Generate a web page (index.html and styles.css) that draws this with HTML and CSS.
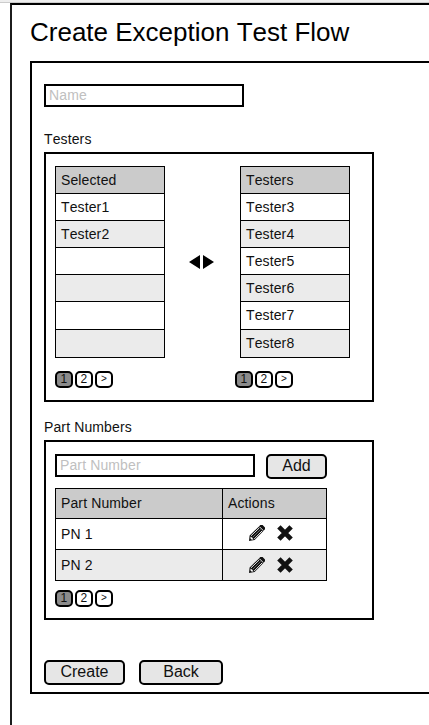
FILE: index.html
```html
<!DOCTYPE html>
<html lang="en">
<head>
<meta charset="utf-8">
<title>Create Exception Test Flow</title>
<link rel="stylesheet" href="styles.css">
</head>
<body>
<svg class="defs" width="0" height="0" aria-hidden="true">
  <symbol id="pencil" viewBox="0 0 16 16">
    <path fill="currentColor" d="M0 16 .6 10.4 10 1.4 11.3 0H13.6L16 2.4V4.2L14.8 5.4 5.6 15Z"/>
    <path fill="none" stroke="#fff" stroke-width=".9" d="M2 10.8 10.2 3M5.2 14 13.2 5.8M10.6 1.9 14.1 5.4"/>
    <path fill="#fff" d="M1.7 11.4 4.6 14.3 2.8 14.7 1.3 13.2Z"/>
    <path fill="none" stroke="#aaa" stroke-width=".6" d="M3.6 12.4 11.7 4.4"/>
  </symbol>
  <symbol id="cross" viewBox="0 0 16 16">
    <path fill="none" stroke="currentColor" stroke-width="4.8" d="M1.9 1.9 14.1 14.1M14.1 1.9 1.9 14.1"/>
  </symbol>
</svg>
<div class="strip"></div>
<main class="window">
  <h1>Create Exception Test Flow</h1>
  <section class="panel">
    <input class="field" placeholder="Name">
    <h2 class="testers-label">Testers</h2>
    <div class="box testers">
      <div>
        <ul class="list">
          <li>Selected</li><li>Tester1</li><li>Tester2</li><li></li><li></li><li></li><li></li>
        </ul>
        <nav class="pager"><span class="on">1</span><span>2</span><span class="next">&gt;</span></nav>
      </div>
      <svg class="arrows" viewBox="0 0 25 14"><path d="M0 7 11 0V14ZM14 0 25 7 14 14Z"/></svg>
      <div class="right">
        <ul class="list">
          <li>Testers</li><li>Tester3</li><li>Tester4</li><li>Tester5</li><li>Tester6</li><li>Tester7</li><li>Tester8</li>
        </ul>
        <nav class="pager"><span class="on">1</span><span>2</span><span class="next">&gt;</span></nav>
      </div>
    </div>
    <h2 class="parts-label">Part Numbers</h2>
    <div class="box parts">
      <div class="entry"><input class="field" placeholder="Part Number"><button class="add">Add</button></div>
      <div class="grid">
        <div class="row head"><span>Part Number</span><span>Actions</span></div>
        <div class="row"><span>PN 1</span><span class="actions"><svg><use href="#pencil"/></svg><svg><use href="#cross"/></svg></span></div>
        <div class="row alt"><span>PN 2</span><span class="actions"><svg><use href="#pencil"/></svg><svg><use href="#cross"/></svg></span></div>
      </div>
      <nav class="pager"><span class="on">1</span><span>2</span><span class="next">&gt;</span></nav>
    </div>
    <div class="buttons"><button class="create">Create</button><button class="back">Back</button></div>
  </section>
</main>
</body>
</html>
```
FILE: styles.css
```css
* { box-sizing: border-box; }
body {
  margin: 0;
  height: 725px;
  overflow: hidden;
  background: #fff;
  color: #111;
  font: 14px/16px "Liberation Sans", Arial, sans-serif;
  letter-spacing: .12px;
  font-kerning: none;
}
.defs { display: none; }
.strip { height: 3px; background: #eee; border-bottom: 1px solid #ccc; }
.window {
  height: 722px;
  margin-left: 10px;
  padding-left: 18px;
  border-left: 2px solid #1c1c1c;
  border-top: 2px solid #000;
}
h1 {
  height: 56px;
  margin: 0;
  padding-top: 12px;
  font-size: 26px;
  line-height: 30px;
  font-weight: normal;
  letter-spacing: 0;
  color: #000;
}
.panel {
  height: 633px;
  border: 2px solid #000;
  border-right: 0;
  padding: 21px 0 0 12px;
}
.field {
  display: block;
  width: 200px;
  height: 23px;
  padding: 0 3px 2px;
  border: 2px solid #000;
  border-radius: 0;
  background: #fff;
  font: inherit;
  font-kerning: none;
  letter-spacing: inherit;
}
.field::placeholder { color: #c0c0c0; opacity: 1; }
h2 { margin: 0; height: 16px; font-size: 14px; font-weight: normal; }
.testers-label { margin-top: 24px; }
.parts-label { margin-top: 17px; }
.box { width: 330px; border: 2px solid #000; }
.testers { display: flex; height: 250px; margin-top: 5px; padding: 12px 0 0 9px; }
.list {
  display: grid;
  grid-template-rows: repeat(5, 27px) 28px 28px;
  width: 110px;
  margin: 0;
  padding: 0;
  border: 1px solid #000;
  border-bottom: 0;
  list-style: none;
}
.list li { border-bottom: 1px solid #000; padding: 5px 5px 0; }
.list li:nth-child(odd) { background: #ebebeb; }
.list li:first-child { background: #cbcbcb; }
.pager { display: flex; gap: 2px; margin-top: 13px; }
.pager span {
  width: 18px;
  height: 17px;
  border: 2px solid #000;
  border-radius: 5px;
  font-size: 12px;
  line-height: 13px;
  text-align: center;
}
.pager .on { background: #8b8b8b; }
.pager .next { font-size: 10px; line-height: 12px; }
.arrows { width: 25px; height: 14px; margin: 89px 26px 0 24px; }
.right .pager { margin-left: -5px; }
.parts { height: 180px; margin-top: 5px; padding: 12px 0 0 9px; }
.entry { display: flex; gap: 11px; }
button {
  height: 25px;
  padding: 0 0 2px;
  border: 2px solid #000;
  border-radius: 5px;
  background: #e6e6e6;
  color: #111;
  font: 16px/18px "Liberation Sans", Arial, sans-serif;
}
.add { width: 61px; }
.grid { width: 272px; margin-top: 9px; border: 1px solid #000; border-bottom: 0; }
.row { display: grid; grid-template-columns: 166px 1fr; height: 31px; border-bottom: 1px solid #000; }
.row span { padding: 7px 5px 0; }
.row span + span { border-left: 1px solid #000; }
.head { height: 30px; background: #cbcbcb; }
.head span { padding-top: 6px; }
.alt { background: #ebebeb; }
.row .actions { display: flex; gap: 12px; padding: 6px 0 0 26px; }
.alt .actions { padding-top: 7px; }
.actions svg { width: 16px; height: 16px; }
.parts .pager { margin-top: 9px; }
.buttons { display: flex; gap: 14px; margin-top: 40px; }
.create { width: 81px; }
.back { width: 84px; }
```
